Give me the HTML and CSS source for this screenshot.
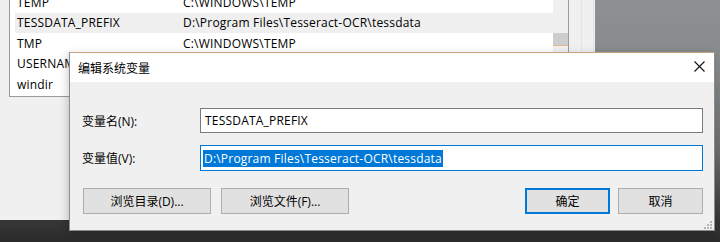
FILE: index.html
```html
<!DOCTYPE html>
<html lang="zh-CN">
<head>
  <meta charset="UTF-8">
  <title>编辑系统变量</title>
  <link rel="stylesheet" href="styles.css">
</head>
<body>
  <!-- window behind: environment variables list -->
  <div class="bgwin">
    <div class="list">
      <div class="rows">
        <div class="row"><span class="name">TEMP</span><span>C:\WINDOWS\TEMP</span></div>
        <div class="row selected"><span class="name">TESSDATA_PREFIX</span><span>D:\Program Files\Tesseract-OCR\tessdata</span></div>
        <div class="row"><span class="name">TMP</span><span>C:\WINDOWS\TEMP</span></div>
        <div class="row"><span class="name">USERNAME</span><span>SYSTEM</span></div>
        <div class="row"><span class="name">windir</span><span>C:\WINDOWS</span></div>
      </div>
      <div class="scrollbar"><div class="thumb"></div></div>
    </div>
    <div class="side"></div>
  </div>

  <!-- edit dialog -->
  <div class="dialog">
    <div class="titlebar">
      <span class="title">编辑系统变量</span>
      <svg class="close" width="11" height="11" viewBox="0 0 11 11">
        <path d="M0.5 0.5 L10.5 10.5 M10.5 0.5 L0.5 10.5" stroke="#111" stroke-width="1.1" fill="none"/>
      </svg>
    </div>
    <div class="content">
      <div class="field">
        <label>变量名(N):</label>
        <div class="input">TESSDATA_PREFIX</div>
      </div>
      <div class="field">
        <label>变量值(V):</label>
        <div class="input focused"><span class="sel">D:\Program Files\Tesseract-OCR\tessdata</span></div>
      </div>
      <div class="buttons">
        <div class="left">
          <button class="btn wide">浏览目录(D)...</button>
          <button class="btn wide">浏览文件(F)...</button>
        </div>
        <div class="right">
          <button class="btn default">确定</button>
          <button class="btn">取消</button>
        </div>
      </div>
      <svg class="grip" width="8" height="8" viewBox="0 0 8 8">
        <rect x="6" y="0" width="2" height="2" fill="#b5b5b5"/>
        <rect x="3" y="3" width="2" height="2" fill="#b5b5b5"/>
        <rect x="6" y="3" width="2" height="2" fill="#b5b5b5"/>
        <rect x="0" y="6" width="2" height="2" fill="#b5b5b5"/>
        <rect x="3" y="6" width="2" height="2" fill="#b5b5b5"/>
        <rect x="6" y="6" width="2" height="2" fill="#b5b5b5"/>
      </svg>
    </div>
  </div>
</body>
</html>
```
FILE: styles.css
```css
body {
  margin: 0;
  width: 720px;
  height: 242px;
  overflow: hidden;
  position: relative;
  font-family: "Open Sans", "Noto Sans CJK SC", sans-serif;
  font-size: 12px;
  color: #000;
  background: linear-gradient(#8e9193 0px, #868a8c 60px, #6a6c6e 150px, #3a3a3a 215px, #2a2a2a 242px);
}

.bgwin {
  position: absolute;
  left: 0;
  top: 0;
  width: 595px;
  height: 220px;
  background-color: #f0f0f0;
  display: flex;
  align-items: flex-start;
}

.list {
  margin-left: 9px;
  width: 560px;
  height: 97px;
  box-sizing: border-box;
  border: 1px solid #9a9a9a;
  border-top: none;
  background: #fff;
  display: flex;
  overflow: hidden;
}

.rows {
  flex: 1;
  padding-left: 5px;
  margin-top: -8px;
  letter-spacing: 0.2px;
}

.row {
  height: 20.5px;
  display: flex;
  align-items: center;
  padding-left: 2px;
  white-space: nowrap;
}

.row.selected {
  background-color: #efefef;
}

.name {
  width: 166px;
}

.scrollbar {
  width: 15px;
  background-color: #f0f0f0;
  padding-top: 33px;
}

.thumb {
  height: 12px;
  background-color: #cdcdcd;
  border-bottom: 1px solid #e0b890;
}

.side {
  width: 25px;
  height: 52px;
  border-right: 1px solid #e2e2e2;
  box-sizing: border-box;
  background: linear-gradient(90deg, #f0f0f0 12px, #e4e4e4 12px, #e4e4e4 13px, #f0f0f0 13px);
}

.dialog {
  position: absolute;
  left: 69px;
  top: 52px;
  width: 646px;
  height: 179px;
  box-sizing: border-box;
  border: 1px solid #8c8c8c;
  border-top-color: #c9a27a;
  background-color: #f0f0f0;
  box-shadow: -2px 2px 8px rgba(0, 0, 0, 0.18);
  display: flex;
  flex-direction: column;
}

.titlebar {
  height: 29px;
  background-color: #fff;
  display: flex;
  align-items: center;
  justify-content: space-between;
  padding: 0 9px 0 8px;
}

.title {
  font-family: "Noto Sans CJK SC", sans-serif;
  margin-top: -1px;
}

.close {
  margin-top: -3px;
}

.content {
  flex: 1;
  position: relative;
  padding: 26px 0 0 12px;
}

.field {
  display: grid;
  grid-template-columns: 118px 503px;
  align-items: center;
  margin-bottom: 12px;
}

.field + .field {
  margin-bottom: 17px;
}

.input {
  height: 25px;
  box-sizing: border-box;
  border: 1px solid #7a7a7a;
  background-color: #fff;
  display: flex;
  align-items: center;
  padding-left: 4px;
  white-space: nowrap;
  letter-spacing: 0.2px;
}

.input.focused {
  height: 26px;
  border-color: #0078d7;
  padding-left: 2px;
}

.sel {
  background-color: #0078d7;
  color: #fff;
  line-height: 17px;
  padding: 0 1px;
}

.buttons {
  display: flex;
  justify-content: space-between;
  width: 620px;
  padding-left: 1px;
}

.left, .right {
  display: flex;
  gap: 10px;
}

.right {
  gap: 8px;
}

.btn {
  width: 85px;
  height: 26px;
  box-sizing: border-box;
  border: 1px solid #adadad;
  background-color: #e1e1e1;
  font-family: "Open Sans", "Noto Sans CJK SC", sans-serif;
  font-size: 12px;
  color: #000;
  padding: 0;
}

.btn.wide {
  width: 128px;
}

.btn.default {
  border: 2px solid #0078d7;
}

.grip {
  position: absolute;
  right: 2px;
  bottom: 1px;
}
```
